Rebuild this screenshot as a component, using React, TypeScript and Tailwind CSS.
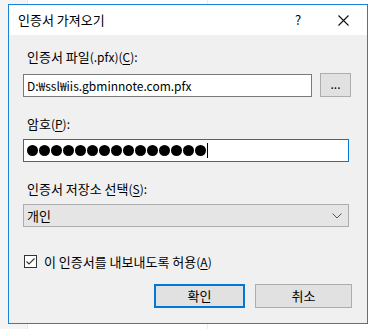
import React from 'react';

// Underlined access key, like "(C)" in Windows labels
const Key: React.FC<{ k: string }> = ({ k }) => (
  <span className="text-[12px]">
    (<span className="underline underline-offset-2">{k}</span>)
  </span>
);

const ChevronDown = () => (
  <svg width="10" height="6" viewBox="0 0 10 6" fill="none">
    <path d="M0.5 0.5L5 5L9.5 0.5" stroke="#555" strokeWidth="1" />
  </svg>
);

const CloseIcon = () => (
  <svg width="11" height="11" viewBox="0 0 11 11" fill="none">
    <path d="M0.5 0.5L10.5 10.5M10.5 0.5L0.5 10.5" stroke="#111" strokeWidth="1.1" />
  </svg>
);

const CheckBox = () => (
  <div className="w-[13px] h-[13px] border border-[#333] bg-white flex items-center justify-center">
    <svg width="11" height="11" viewBox="0 0 11 11" fill="none">
      <path d="M1.5 5.5L4 8L9.5 2.5" stroke="#333" strokeWidth="1.1" />
    </svg>
  </div>
);

export default function App() {
  const dots = Array.from({ length: 15 });

  return (
    <div className="relative w-[375px] h-[329px] overflow-hidden bg-white text-[13px] text-black font-['Noto_Sans_CJK_KR','Noto_Sans',sans-serif]">
      {/* window behind the dialog */}
      <div className="flex h-full">
        <div className="w-[28px] h-full bg-[#f4f4f4] border-r border-[#e6e6e6]" />
        <div className="w-[180px] h-full border-r border-[#ececec]" />
        <div className="flex-1 h-full" />
      </div>

      {/* dialog */}
      <div className="absolute left-[8px] top-[4px] w-[360px] h-[320px] border border-[#1883d7] bg-[#f0f0f0] flex flex-col">
        <div className="h-[30px] bg-white flex items-center pl-[9px] pr-[18px] shrink-0">
          <span className="flex-1 leading-[16px]">인증서 가져오기</span>
          <span className="w-[14px] text-center leading-[16px] mr-[33px]">?</span>
          <CloseIcon />
        </div>

        <div className="flex flex-col px-[14px] pt-[14px]">
          <div className="leading-[16px] pl-[4px]">
            인증서 파일<span className="text-[12px]">(.pfx)</span><Key k="C" />
            <span className="text-[12px]">:</span>
          </div>

          <div className="flex items-end gap-[8px] mt-[8px]">
            <div className="w-[289px] h-[23px] bg-white border border-[#7a7a7a] flex items-center px-[3px] leading-[16px] text-[12px]">
              D:₩ssl₩iis.gbminnote.com.pfx
            </div>
            <div className="w-[31px] h-[24px] bg-[#e1e1e1] border border-[#adadad] flex items-center justify-center leading-[10px] pb-[2px] text-[12px]">
              ...
            </div>
          </div>

          <div className="leading-[16px] pl-[4px] mt-[19px]">
            암호<Key k="P" />
            <span className="text-[12px]">:</span>
          </div>

          <div className="w-[326px] h-[23px] bg-white border border-[#0078d7] flex items-center px-[3px] mt-[7px]">
            <div className="flex gap-[1px]">
              {dots.map((_, i) => (
                <span key={i} className="w-[11px] h-[11px] rounded-full bg-black" />
              ))}
            </div>
            <span className="w-px h-[15px] bg-black ml-[1px]" />
          </div>

          <div className="leading-[16px] pl-[4px] mt-[19px]">
            인증서 저장소 선택<Key k="S" />
            <span className="text-[12px]">:</span>
          </div>

          <div className="w-[326px] h-[23px] bg-[#e5e5e5] border border-[#adadad] flex items-center justify-between pl-[3px] pr-[6px] mt-[7px]">
            <span className="leading-[16px]">개인</span>
            <ChevronDown />
          </div>

          <div className="flex items-center gap-[7px] mt-[26px] h-[17px] pl-px">
            <CheckBox />
            <span className="leading-[16px]">
              이 인증서를 내보내도록 허용<Key k="A" />
            </span>
          </div>

          <div className="flex justify-end gap-[10px] mt-[14px] pr-[1px]">
            <div className="w-[91px] h-[24px] bg-[#e1e1e1] border-2 border-[#0078d7] flex items-center justify-center leading-[16px]">
              확인
            </div>
            <div className="w-[97px] h-[24px] bg-[#e1e1e1] border border-[#adadad] flex items-center justify-center leading-[16px]">
              취소
            </div>
          </div>
        </div>
      </div>
    </div>
  );
}
